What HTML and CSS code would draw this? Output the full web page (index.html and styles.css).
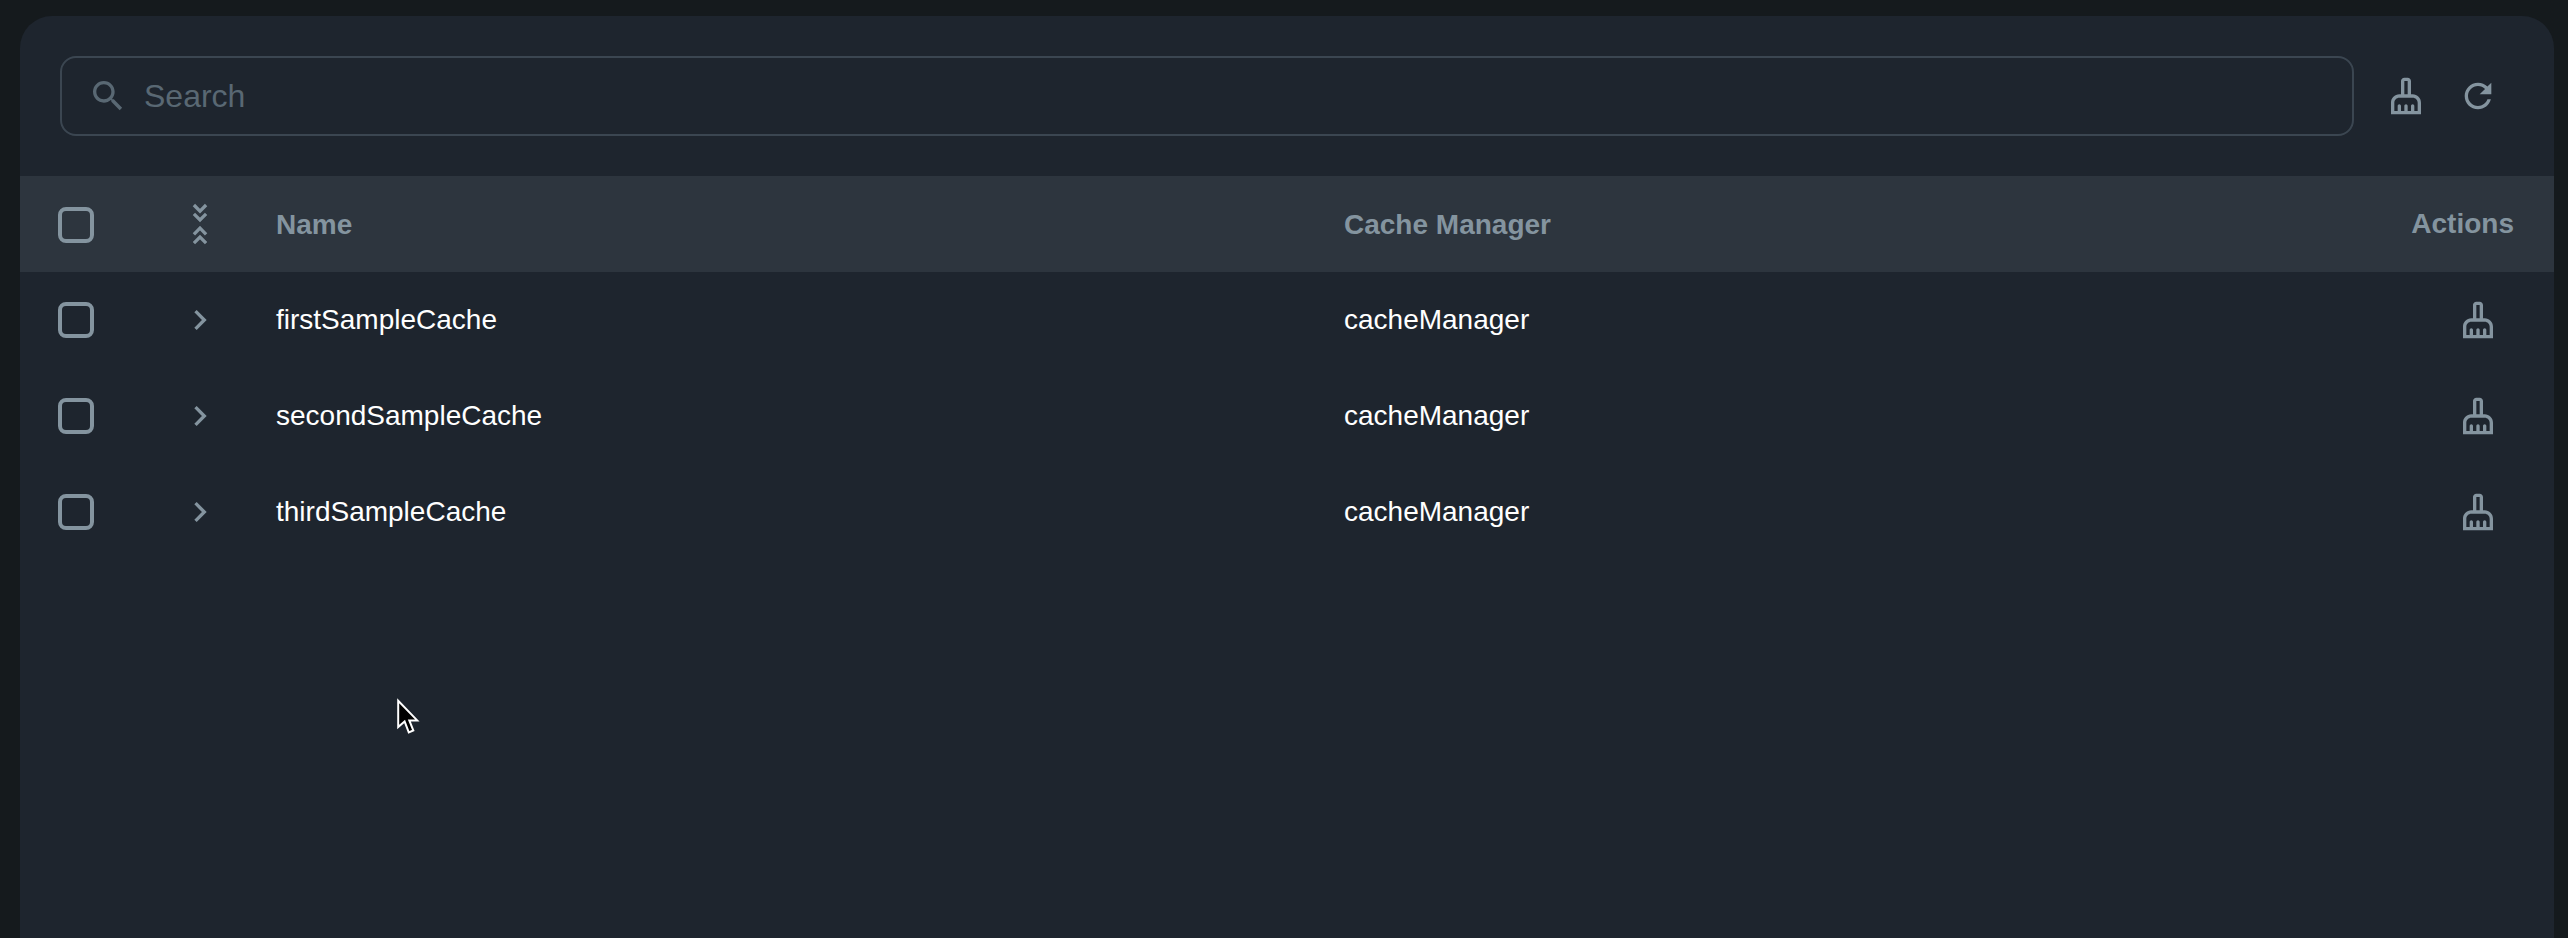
FILE: index.html
```html
<!DOCTYPE html>
<html lang="en">
<head>
<meta charset="utf-8">
<title>Caches</title>
<link rel="stylesheet" href="styles.css">
</head>
<body>
<svg class="defs" aria-hidden="true">
  <symbol id="broom" viewBox="0 0 24 24"><path d="M16 11h-1V3c0-1.1-.9-2-2-2h-2c-1.1 0-2 .9-2 2v8H8c-2.76 0-5 2.24-5 5v7h18v-7c0-2.76-2.24-5-5-5zm-5-8h2v8h-2V3zm8 18h-2v-3c0-.55-.45-1-1-1s-1 .45-1 1v3h-2v-3c0-.55-.45-1-1-1s-1 .45-1 1v3H9v-3c0-.55-.45-1-1-1s-1 .45-1 1v3H5v-5c0-1.65 1.35-3 3-3h8c1.65 0 3 1.35 3 3v5z"/></symbol>
  <symbol id="chevron" viewBox="0 0 24 24"><path d="M10 6 8.59 7.41 13.17 12l-4.58 4.59L10 18l6-6z"/></symbol>
</svg>
<main class="panel">
  <div class="toolbar">
    <label class="search">
      <svg class="icon" viewBox="0 0 24 24"><path d="M15.5 14h-.79l-.28-.27C15.41 12.59 16 11.11 16 9.5 16 5.91 13.09 3 9.5 3S3 5.91 3 9.5 5.91 16 9.5 16c1.61 0 3.09-.59 4.23-1.57l.27.28v.79l5 4.99L20.49 19l-4.99-5zm-6 0C7.01 14 5 11.99 5 9.5S7.01 5 9.5 5 14 7.01 14 9.5 11.99 14 9.5 14z"/></svg>
      <span>Search</span>
    </label>
    <div class="tools">
      <svg class="icon"><use href="#broom"/></svg>
      <svg class="icon" viewBox="0 0 24 24"><path d="M17.65 6.35C16.2 4.9 14.21 4 12 4c-4.42 0-7.99 3.58-7.99 8s3.57 8 7.99 8c3.73 0 6.84-2.55 7.73-6h-2.08c-.82 2.33-3.04 4-5.65 4-3.31 0-6-2.69-6-6s2.69-6 6-6c1.66 0 3.14.69 4.22 1.78L13 11h7V4l-2.35 2.35z"/></svg>
    </div>
  </div>
  <div class="row head">
    <span class="check"></span>
    <svg class="icon collapse" viewBox="0 0 40 40"><path d="M13.9 1 20 7.1 26.1 1M13.9 9.9 20 16 26.1 9.9M13.9 30.3 20 24.2 26.1 30.3M13.9 39.1 20 33 26.1 39.1"/></svg>
    <span class="label">Name</span>
    <span class="label">Cache Manager</span>
    <span class="actions">Actions</span>
  </div>
  <div class="row">
    <span class="check"></span>
    <svg class="icon"><use href="#chevron"/></svg>
    <span>firstSampleCache</span>
    <span>cacheManager</span>
    <span class="action"><svg class="icon"><use href="#broom"/></svg></span>
  </div>
  <div class="row">
    <span class="check"></span>
    <svg class="icon"><use href="#chevron"/></svg>
    <span>secondSampleCache</span>
    <span>cacheManager</span>
    <span class="action"><svg class="icon"><use href="#broom"/></svg></span>
  </div>
  <div class="row">
    <span class="check"></span>
    <svg class="icon"><use href="#chevron"/></svg>
    <span>thirdSampleCache</span>
    <span>cacheManager</span>
    <span class="action"><svg class="icon"><use href="#broom"/></svg></span>
  </div>
</main>
<svg class="cursor" viewBox="0 0 26 38"><path d="M2.2 3.8V30L8.6 24.5 12.8 35.4 17.3 33.5 13.3 23.4H21.2z"/></svg>
</body>
</html>
```
FILE: styles.css
```css
* { box-sizing: border-box; }
body {
  margin: 0;
  height: 938px;
  padding: 16px 14px 0 20px;
  overflow: hidden;
  background: #151a1d;
  color: #fff;
  font: 28px/40px "Liberation Sans", Arial, sans-serif;
}
.defs { display: none; }
.panel {
  height: 922px;
  overflow: hidden;
  background: #1e252e;
  border-radius: 32px 32px 0 0;
}
.icon {
  display: block;
  width: 40px;
  height: 40px;
  fill: #84949f;
  flex: none;
}
.toolbar {
  display: flex;
  align-items: center;
  gap: 32px;
  height: 160px;
  padding: 0 56px 0 40px;
}
.search {
  display: flex;
  flex: 1;
  align-items: center;
  gap: 16px;
  height: 80px;
  padding: 0 26px;
  border: 2px solid #3b4651;
  border-radius: 16px;
  color: #596873;
  font-size: 32px;
}
.search .icon { fill: #596873; }
.tools { display: flex; gap: 32px; }
.row {
  display: grid;
  grid-template-columns: 122px 96px 1068px 1fr auto;
  align-items: center;
  height: 96px;
  padding: 0 40px 0 38px;
}
.head {
  background: #2d353e;
  color: #84949f;
  font-weight: 700;
}
.head .label { padding-top: 2px; }
.check {
  width: 36px;
  height: 36px;
  border: 4px solid #84949f;
  border-radius: 8px;
}
.head .check { margin-top: 2px; }
.collapse {
  overflow: visible;
  fill: none;
  stroke: #84949f;
  stroke-width: 3.3;
}
.action { padding-right: 16px; }
.cursor {
  position: absolute;
  left: 396px;
  top: 697px;
  width: 26px;
  height: 38px;
  fill: #000;
  stroke: #fff;
  stroke-width: 2;
}
```
